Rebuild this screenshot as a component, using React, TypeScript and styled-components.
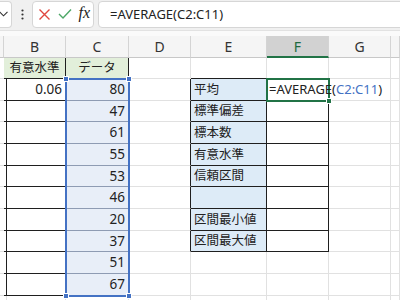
import React from "react";
import styled, { createGlobalStyle } from "styled-components";

const Global = createGlobalStyle`
  html, body { margin: 0; padding: 0; background: #ffffff; }
  body { width: 400px; height: 300px; overflow: hidden; font-family: "Noto Sans", "Noto Sans CJK JP", sans-serif; }
  #root { width: 400px; height: 300px; }
`;

const COLS = [4, 62, 63, 62, 76, 62, 62, 9];
const ROWS = [22, 21, ...Array(10).fill(21.67), 12];
const GRID = "#e1e1e1";
const DARK = "#1f1f1f";
const SEL = "#4472c4";
const ACTIVE = "#217346";

const Page = styled.div`
  width: 400px;
  height: 300px;
  display: flex;
  flex-direction: column;
  background: #fff;
  overflow: hidden;
`;

const FormulaBar = styled.div`
  height: 31px;
  flex: none;
  background: #f0f0f0;
  display: flex;
  align-items: center;
  gap: 4px;
  padding: 0 0 2px 0;
  box-sizing: border-box;
  border-bottom: 1px solid #e2e2e2;
`;

const NameBox = styled.div`
  width: 13px;
  height: 27px;
  margin-left: -1px;
  background: #fff;
  border: 1px solid #d6d6d6;
  border-left: none;
  border-radius: 0 4px 4px 0;
  box-sizing: border-box;
  display: flex;
  align-items: center;
  justify-content: flex-start;
`;

const Dots = styled.div`
  width: 12px;
  display: flex;
  justify-content: center;
`;

const ButtonBox = styled.div`
  width: 62px;
  height: 27px;
  background: #fff;
  border: 1px solid #d6d6d6;
  border-radius: 4px;
  box-sizing: border-box;
  display: flex;
  align-items: center;
  justify-content: space-between;
  padding: 0 3px 0 5px;
`;

const Fx = styled.span`
  font-family: "Liberation Serif", "DejaVu Serif", serif;
  font-style: italic;
  font-size: 16px;
  color: #222;
  line-height: 1;
  margin-top: -2px;
`;

const FormulaInput = styled.div`
  flex: 1;
  height: 27px;
  margin-right: -6px;
  background: #fff;
  border: 1px solid #d6d6d6;
  border-radius: 4px;
  box-sizing: border-box;
  display: flex;
  align-items: center;
  padding-left: 11px;
  font-family: "Noto Sans", sans-serif;
  font-size: 13px;
  color: #222;
`;

const Spacer = styled.div`
  height: 5px;
  flex: none;
  background: #fafafa;
`;

const Sheet = styled.div`
  position: relative;
  flex: 1;
  display: grid;
  grid-template-columns: ${COLS.map((c) => c + "px").join(" ")};
  grid-template-rows: ${ROWS.map((r) => r + "px").join(" ")};
`;

type CellProps = {
  $bg?: string;
  $r?: string;
  $b?: string;
  $bw?: number;
  $align?: "left" | "right" | "center";
  $color?: string;
  $jp?: boolean;
  $header?: boolean;
};

const Cell = styled.div<CellProps>`
  box-sizing: border-box;
  background: ${(p) => p.$bg || "transparent"};
  border-right: 1px solid ${(p) => p.$r || GRID};
  border-bottom: ${(p) => p.$bw || 1}px solid ${(p) => p.$b || GRID};
  display: flex;
  align-items: center;
  justify-content: ${(p) =>
    p.$align === "right" ? "flex-end" : p.$align === "center" ? "center" : "flex-start"};
  padding: ${(p) => (p.$header ? "1px 0 0 0" : "1px 3px 0 3px")};
  white-space: nowrap;
  overflow: visible;
  font-size: ${(p) => (p.$header ? "14px" : p.$jp ? "12.5px" : "13.5px")};
  color: ${(p) => p.$color || "#222"};
  line-height: 1;
`;

const Ref = styled.span`
  color: ${SEL};
`;

const FormulaText = styled.span`
  font-size: 13px;
  position: relative;
  z-index: 3;
  margin-left: -1px;
`;

const Selection = styled.div`
  position: absolute;
  left: 65px;
  top: 42px;
  width: 65px;
  height: 219px;
  border: 2px solid ${SEL};
  box-sizing: border-box;
  pointer-events: none;
`;

const ActiveCell = styled.div`
  position: absolute;
  left: 266px;
  top: 42px;
  width: 64px;
  height: 24px;
  border: 2px solid ${ACTIVE};
  box-sizing: border-box;
  pointer-events: none;
  z-index: 2;
`;

const Handle = styled.div<{ $x: number; $y: number; $c: string }>`
  position: absolute;
  left: ${(p) => p.$x - 3}px;
  top: ${(p) => p.$y - 3}px;
  width: 6px;
  height: 6px;
  background: ${(p) => p.$c};
  border: 1px solid #fff;
  box-sizing: border-box;
  z-index: 4;
`;

const LETTERS = ["", "B", "C", "D", "E", "F", "G", ""];
const E_LABELS = ["平均", "標準偏差", "標本数", "有意水準", "信頼区間", "", "区間最小値", "区間最大値"];
const C_DATA = [80, 47, 61, 55, 53, 46, 20, 37, 51, 67];

function cellFor(r: number, c: number) {
  const key = `${r}-${c}`;
  if (r === 0) {
    const active = c === 5;
    return (
      <Cell
        key={key}
        $header
        $align="center"
        $bg={active ? "#d2d2d2" : "#f5f5f5"}
        $r="#d4d4d4"
        $b={active ? ACTIVE : "#c8c8c8"}
        $bw={active ? 2 : 1}
        $color={active ? "#1e6b40" : "#333"}
      >
        {LETTERS[c]}
      </Cell>
    );
  }
  const inBC = r >= 1 && r <= 11;
  const inTable = r >= 2 && r <= 9;
  let props: CellProps = {};
  let content: React.ReactNode = null;

  if (c === 0 && inBC) props.$r = DARK;
  if (c === 1 && inBC) {
    props.$r = DARK;
    props.$b = DARK;
    if (r === 1) {
      props.$bg = "#e2efda";
      props.$jp = true;
      props.$align = "center";
      content = "有意水準";
    } else {
      props.$align = "right";
      if (r === 2) content = "0.06";
    }
  }
  if (c === 2 && inBC) {
    props.$r = DARK;
    props.$b = r === 1 ? DARK : "#8e9bb3";
    if (r === 1) {
      props.$bg = "#e2efda";
      props.$jp = true;
      props.$align = "center";
      content = "データ";
    } else {
      props.$bg = "#e8eef8";
      props.$align = "right";
      content = String(C_DATA[r - 2]);
    }
  }
  if (c === 3 && inTable) props.$r = DARK;
  if ((c === 4 || c === 5) && r === 1) props.$b = DARK;
  if (c === 4 && inTable) {
    props.$r = DARK;
    props.$b = DARK;
    props.$bg = "#ddebf7";
    props.$jp = true;
    content = E_LABELS[r - 2];
  }
  if (c === 5 && inTable) {
    props.$r = DARK;
    props.$b = DARK;
    if (r === 2) {
      content = (
        <FormulaText>
          =AVERAGE(<Ref>C2:C11</Ref>)
        </FormulaText>
      );
    }
  }
  return (
    <Cell key={key} {...props}>
      {content}
    </Cell>
  );
}

const CrossIcon = () => (
  <svg width="13" height="13" viewBox="0 0 13 13">
    <path d="M1.5 1.5 L11.5 11.5 M11.5 1.5 L1.5 11.5" stroke="#e0463e" strokeWidth="1.4" fill="none" />
  </svg>
);

const CheckIcon = () => (
  <svg width="14" height="12" viewBox="0 0 14 12">
    <path d="M1 6 L5 10 L13 1.5" stroke="#4da767" strokeWidth="1.4" fill="none" />
  </svg>
);

const Chevron = () => (
  <svg width="9" height="6" viewBox="0 0 9 6">
    <path d="M0.5 0.8 L4.5 4.8 L8.5 0.8" stroke="#333" strokeWidth="1.1" fill="none" />
  </svg>
);

const VDots = () => (
  <svg width="3" height="11" viewBox="0 0 3 11">
    <circle cx="1.5" cy="1.5" r="1.1" fill="#333" />
    <circle cx="1.5" cy="5.5" r="1.1" fill="#333" />
    <circle cx="1.5" cy="9.5" r="1.1" fill="#333" />
  </svg>
);

export default function App() {
  const cells: React.ReactNode[] = [];
  for (let r = 0; r < ROWS.length; r++) {
    for (let c = 0; c < COLS.length; c++) {
      cells.push(cellFor(r, c));
    }
  }
  return (
    <>
      <Global />
      <Page>
        <FormulaBar>
          <NameBox>
            <Chevron />
          </NameBox>
          <Dots>
            <VDots />
          </Dots>
          <ButtonBox>
            <CrossIcon />
            <CheckIcon />
            <Fx>fx</Fx>
          </ButtonBox>
          <FormulaInput>=AVERAGE(C2:C11)</FormulaInput>
        </FormulaBar>
        <Spacer />
        <Sheet>
          {cells}
          <Selection />
          <Handle $x={66} $y={43} $c={SEL} />
          <Handle $x={129} $y={43} $c={SEL} />
          <Handle $x={66} $y={260} $c={SEL} />
          <Handle $x={129} $y={260} $c={SEL} />
          <ActiveCell />
          <Handle $x={329} $y={65} $c={ACTIVE} />
        </Sheet>
      </Page>
    </>
  );
}
